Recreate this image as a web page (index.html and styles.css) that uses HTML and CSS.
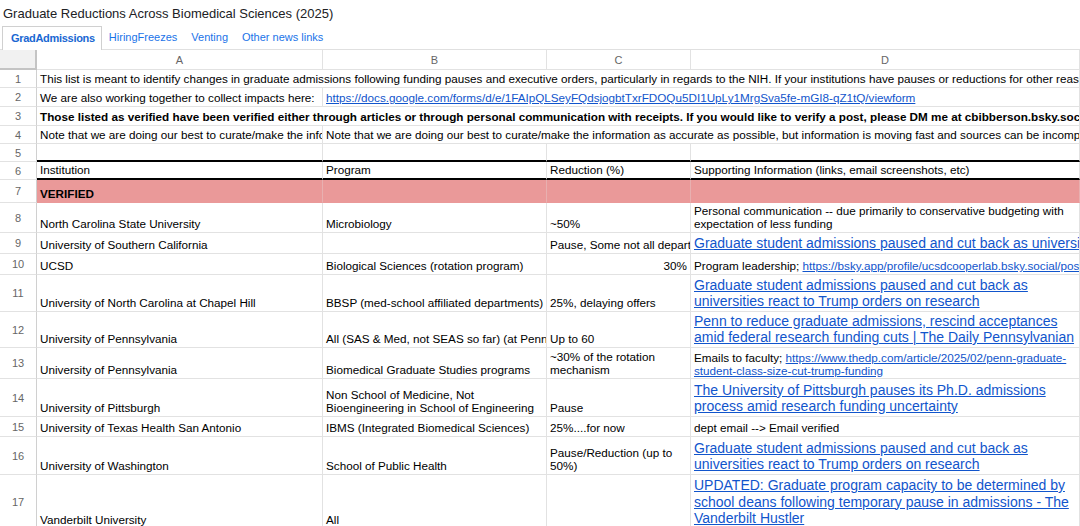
FILE: index.html
```html
<!DOCTYPE html>
<html>
<head>
<meta charset="utf-8">
<link rel="stylesheet" href="styles.css">
</head>
<body>
<div class="title">Graduate Reductions Across Biomedical Sciences (2025)</div>
<div class="tabs">
  <div class="tab active">GradAdmissions</div>
  <div class="tab">HiringFreezes</div>
  <div class="tab">Venting</div>
  <div class="tab">Other news links</div>
</div>
<div class="sheet">
  <div class="corner"></div>
  <div class="colh">A</div><div class="colh">B</div><div class="colh">C</div><div class="colh">D</div>

  <div class="rn">1</div>
  <div class="cell span4 clip"><div class="t">This list is meant to identify changes in graduate admissions following funding pauses and executive orders, particularly in regards to the NIH. If your institutions have pauses or reductions for other reasons, please let us know</div></div>

  <div class="rn">2</div>
  <div class="cell clip"><div class="t">We are also working together to collect impacts here:</div></div>
  <div class="cell span3 clip"><div class="t"><a href="#">https://docs.google.com/forms/d/e/1FAIpQLSeyFQdsjogbtTxrFDOQu5DI1UpLy1MrgSva5fe-mGI8-qZ1tQ/viewform</a></div></div>

  <div class="rn">3</div>
  <div class="cell span4 clip bold"><div class="t">Those listed as verified have been verified either through articles or through personal communication with receipts. If you would like to verify a post, please DM me at cbibberson.bsky.social</div></div>

  <div class="rn">4</div>
  <div class="cell clip"><div class="t">Note that we are doing our best to curate/make the information as accurate as possible</div></div>
  <div class="cell span3 clip"><div class="t">Note that we are doing our best to curate/make the information as accurate as possible, but information is moving fast and sources can be incomplete</div></div>

  <div class="rn">5</div>
  <div class="cell thick"></div><div class="cell thick"></div><div class="cell thick"></div><div class="cell thick"></div>

  <div class="rn">6</div>
  <div class="cell thick clip"><div class="t">Institution</div></div>
  <div class="cell thick clip"><div class="t">Program</div></div>
  <div class="cell thick clip"><div class="t">Reduction (%)</div></div>
  <div class="cell thick clip"><div class="t">Supporting Information (links, email screenshots, etc)</div></div>

  <div class="rn">7</div>
  <div class="cell pink clip bold"><div class="t">VERIFIED</div></div>
  <div class="cell pink"></div><div class="cell pink"></div><div class="cell pink"></div>

  <div class="rn">8</div>
  <div class="cell clip"><div class="t">North Carolina State University</div></div>
  <div class="cell clip"><div class="t">Microbiology</div></div>
  <div class="cell clip"><div class="t">~50%</div></div>
  <div class="cell wrap"><div class="t">Personal communication -- due primarily to conservative budgeting with expectation of less funding</div></div>

  <div class="rn">9</div>
  <div class="cell clip"><div class="t">University of Southern California</div></div>
  <div class="cell"></div>
  <div class="cell clip"><div class="t">Pause, Some not all departments</div></div>
  <div class="cell clip big"><div class="t"><a href="#">Graduate student admissions paused and cut back as universities react to Trump orders on research</a></div></div>

  <div class="rn">10</div>
  <div class="cell clip"><div class="t">UCSD</div></div>
  <div class="cell clip"><div class="t">Biological Sciences (rotation program)</div></div>
  <div class="cell clip num"><div class="t">30%</div></div>
  <div class="cell clip"><div class="t">Program leadership; <a href="#">https://bsky.app/profile/ucsdcooperlab.bsky.social/post/3lhx</a></div></div>

  <div class="rn">11</div>
  <div class="cell clip"><div class="t">University of North Carolina at Chapel Hill</div></div>
  <div class="cell clip"><div class="t">BBSP (med-school affiliated departments)</div></div>
  <div class="cell clip"><div class="t">25%, delaying offers</div></div>
  <div class="cell wrap big"><div class="t"><a href="#">Graduate student admissions paused and cut back as universities react to Trump orders on research</a></div></div>

  <div class="rn">12</div>
  <div class="cell clip"><div class="t">University of Pennsylvania</div></div>
  <div class="cell clip"><div class="t">All (SAS &amp; Med, not SEAS so far) (at Penn Med)</div></div>
  <div class="cell clip"><div class="t">Up to 60</div></div>
  <div class="cell wrap big"><div class="t"><a href="#">Penn to reduce graduate admissions, rescind acceptances amid federal research funding cuts | The Daily Pennsylvanian</a></div></div>

  <div class="rn">13</div>
  <div class="cell clip"><div class="t">University of Pennsylvania</div></div>
  <div class="cell clip"><div class="t">Biomedical Graduate Studies programs</div></div>
  <div class="cell wrap"><div class="t">~30% of the rotation mechanism</div></div>
  <div class="cell wrap tight"><div class="t">Emails to faculty; <a href="#">https://www.thedp.com/article/2025/02/penn-graduate-student-class-size-cut-trump-funding</a></div></div>

  <div class="rn">14</div>
  <div class="cell clip"><div class="t">University of Pittsburgh</div></div>
  <div class="cell wrap"><div class="t">Non School of Medicine, Not Bioengineering in School of Engineering</div></div>
  <div class="cell clip"><div class="t">Pause</div></div>
  <div class="cell wrap big"><div class="t"><a href="#">The University of Pittsburgh pauses its Ph.D. admissions process amid research funding uncertainty</a></div></div>

  <div class="rn">15</div>
  <div class="cell clip"><div class="t">University of Texas Health San Antonio</div></div>
  <div class="cell clip"><div class="t">IBMS (Integrated Biomedical Sciences)</div></div>
  <div class="cell clip"><div class="t">25%....for now</div></div>
  <div class="cell clip"><div class="t">dept email --&gt; Email verified</div></div>

  <div class="rn">16</div>
  <div class="cell clip"><div class="t">University of Washington</div></div>
  <div class="cell clip"><div class="t">School of Public Health</div></div>
  <div class="cell wrap"><div class="t">Pause/Reduction (up to 50%)</div></div>
  <div class="cell wrap big"><div class="t"><a href="#">Graduate student admissions paused and cut back as universities react to Trump orders on research</a></div></div>

  <div class="rn">17</div>
  <div class="cell clip"><div class="t">Vanderbilt University</div></div>
  <div class="cell clip"><div class="t">All</div></div>
  <div class="cell"></div>
  <div class="cell wrap big"><div class="t"><a href="#">UPDATED: Graduate program capacity to be determined by school deans following temporary pause in admissions - The Vanderbilt Hustler</a></div></div>
</div>
</body>
</html>
```
FILE: styles.css
```css
html, body {
  margin: 0;
  padding: 0;
  background: #fff;
  overflow: hidden;
  width: 1080px;
  height: 526px;
}
body {
  font-family: "Liberation Sans", Arial, sans-serif;
  color: #000;
}
.title {
  height: 26px;
  line-height: 27px;
  font-size: 13px;
  padding-left: 3px;
  color: #202124;
  white-space: nowrap;
}
.tabs {
  display: flex;
  align-items: flex-end;
  height: 24px;
  padding-left: 2px;
  box-sizing: border-box;
  border-bottom: 1px solid #e0e0e0;
}
.tab {
  height: 23px;
  line-height: 23px;
  padding: 0 7px;
  font-size: 11px;
  color: #1a73e8;
  white-space: nowrap;
}
.tab.active {
  font-weight: bold;
  letter-spacing: -0.3px;
  color: #1967d2;
  background: #fff;
  border: 1px solid #d0d0d0;
  border-bottom: none;
  height: 24px;
  margin-bottom: -1px;
  padding: 0 6px 0 8px;
  box-sizing: border-box;
}
.sheet {
  display: grid;
  grid-template-columns: 37px 286px 224px 144px 389px;
  grid-template-rows: 20px 18px 19px 19px 18px 18px 18px 23px 30px 21px 21px 37px 36px 31px 38px 20px 38px 54px;
  width: 1080px;
  font-size: 11.7px;
}
.sheet > div {
  box-sizing: border-box;
  overflow: hidden;
  border-right: 1px solid #e2e2e2;
  border-bottom: 1px solid #e2e2e2;
}
.corner {
  background: #f1f1f1;
  border-right: 2px solid #c4c4c4 !important;
  border-bottom: 2px solid #c4c4c4 !important;
}
.colh {
  font-size: 11px;
  color: #666;
  display: flex;
  align-items: center;
  justify-content: center;
}
.rn {
  font-size: 11px;
  color: #666;
  display: flex;
  align-items: center;
  justify-content: center;
  border-right-color: #d0d0d0 !important;
}
.cell {
  display: flex;
  flex-direction: column;
  justify-content: flex-end;
  padding: 0 3px 1.5px 3px;
  line-height: 13.4px;
}
.span3 { grid-column: span 3; }
.span4 { grid-column: span 4; }
.clip .t {
  white-space: nowrap;
}
.wrap .t {
  white-space: normal;
}
.bold { font-weight: bold; }
.num .t { text-align: right; }
.big {
  font-size: 14px;
  line-height: 16.5px;
}
.tight { line-height: 13px; }
a {
  color: #1155cc;
  text-decoration: underline;
}
.sheet > .thick {
  border-bottom: 2px solid #000;
}
.sheet > .pink {
  background: #ea9999;
  border-right-color: #e8b0b0;
  border-bottom-color: #ea9999;
}
```
